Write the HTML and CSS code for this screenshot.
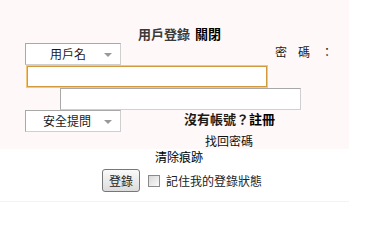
FILE: index.html
```html
<!DOCTYPE html>
<html lang="zh-Hant">
<head>
<meta charset="utf-8">
<title>用戶登錄</title>
<link rel="stylesheet" href="styles.css">
</head>
<body>
<div class="panel">
  <div class="title"><span class="t">用戶登錄</span> <a class="close">關閉</a></div>
  <div class="row r1">
    <div class="sel">用戶名<i class="arr"></i></div>
    <span class="pwlabel">密碼：</span>
  </div>
  <input class="inp inp1" type="text">
  <input class="inp inp2" type="password">
  <div class="row r4">
    <div class="sel">安全提問<i class="arr"></i></div>
    <span class="reg">沒有帳號？<a>註冊</a></span>
  </div>
  <div class="find">找回密碼</div>
</div>
<div class="clear">清除痕跡</div>
<div class="btnrow">
  <button class="btn">登錄</button>
  <span class="cb"></span>
  <span class="remember">記住我的登錄狀態</span>
</div>
<div class="line"></div>
</body>
</html>
```
FILE: styles.css
```css
html, body {
  margin: 0;
  padding: 0;
  background: #fff;
}
body {
  font-family: "Noto Sans CJK TC", "Noto Sans", sans-serif;
  font-size: 12px;
  color: #222;
  width: 372px;
  height: 238px;
  overflow: hidden;
}
.panel {
  width: 349px;
  height: 149px;
  background: #fff8f8;
}
.title {
  padding-top: 26px;
  height: 17px;
  line-height: 15px;
  font-size: 13px;
  font-weight: bold;
  padding-left: 138px;
  box-sizing: content-box;
}
.title .t { color: #3a3a3a; }
.title .close { color: #000; margin-left: 2px; }
.row {
  display: flex;
  align-items: center;
  height: 22px;
}
.sel {
  width: 96px;
  height: 22px;
  box-sizing: border-box;
  margin-left: 25px;
  background: #fff;
  border: 1px solid #a8a8a8;
  border-right-color: #cfcfcf;
  border-bottom-color: #cfcfcf;
  display: flex;
  align-items: center;
  padding-left: 24px;
  line-height: 20px;
  position: relative;
  color: #1a1a1a;
}
.arr {
  position: absolute;
  right: 8px;
  top: 9px;
  width: 0;
  height: 0;
  border-left: 4px solid transparent;
  border-right: 4px solid transparent;
  border-top: 4px solid #999;
}
.pwlabel {
  margin-left: 154px;
  letter-spacing: 11px;
  line-height: 14px;
  margin-top: -4px;
  color: #1a1a1a;
}
.inp {
  display: block;
  box-sizing: border-box;
  margin: 0;
  padding: 0;
  background: #fff;
  font: inherit;
}
.inp1 {
  margin-left: 27px;
  margin-top: 1px;
  width: 240px;
  height: 21px;
  border: 1px solid #d29a3c;
  outline: 1px solid #f4c878;
}
.inp2 {
  margin-left: 60px;
  margin-top: 1px;
  width: 241px;
  height: 22px;
  border: 1px solid #a8a8a8;
  border-right-color: #d0d0d0;
  border-bottom-color: #d0d0d0;
}
.r4 .sel { padding-left: 17px; }
.reg {
  margin-left: 63px;
  font-size: 13px;
  font-weight: bold;
  color: #1a1a1a;
  line-height: 14px;
  margin-top: -4px;
}
.reg a { color: #000; }
.find {
  margin-left: 205px;
  line-height: 16px;
  padding-top: 1px;
  color: #111;
}
.clear {
  margin-left: 155px;
  line-height: 14px;
  margin-top: 1px;
  color: #000;
}
.btnrow {
  display: flex;
  align-items: center;
  margin-top: 5px;
  height: 23px;
}
.btn {
  margin: 0 0 0 102px;
  width: 38px;
  height: 23px;
  padding: 0;
  font: inherit;
  color: #222;
  border: 1px solid #777;
  border-radius: 3px;
  background: linear-gradient(#fafafa, #dcdcdc);
  line-height: 20px;
}
.cb {
  width: 12px;
  height: 12px;
  box-sizing: border-box;
  margin-left: 8px;
  border: 1px solid #8a8a8a;
  background: linear-gradient(135deg, #d8d8d8, #fafafa);
}
.remember {
  margin-left: 6px;
  color: #222;
}
.line {
  width: 349px;
  height: 1px;
  background: #f3f3f3;
  margin-top: 9px;
}
```
